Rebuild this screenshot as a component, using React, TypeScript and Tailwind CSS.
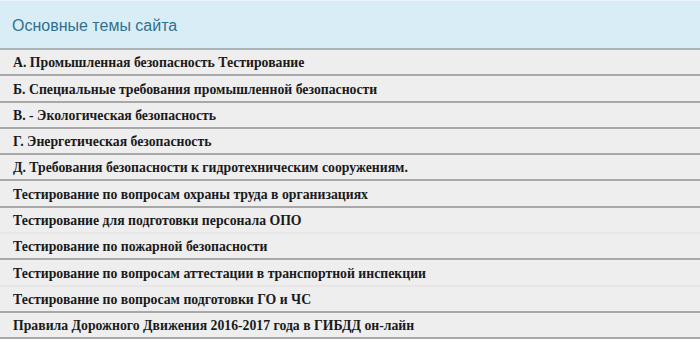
const topics = [
  { title: "А. Промышленная безопасность Тестирование" },
  { title: "Б. Специальные требования промышленной безопасности" },
  { title: "В. - Экологическая безопасность" },
  { title: "Г. Энергетическая безопасность" },
  { title: "Д. Требования безопасности к гидротехническим сооружениям." },
  { title: "Тестирование по вопросам охраны труда в организациях" },
  { title: "Тестирование для подготовки персонала ОПО", faint: true },
  { title: "Тестирование по пожарной безопасности" },
  { title: "Тестирование по вопросам аттестации в транспортной инспекции", faint: true },
  { title: "Тестирование по вопросам подготовки ГО и ЧС" },
  { title: "Правила Дорожного Движения 2016-2017 года в ГИБДД он-лайн" },
];

export default function App() {
  return (
    <div className="w-[700px] h-[341px] overflow-hidden bg-white">
      <div className="h-[50px] bg-[#d9edf7] border-t border-[#e8f4fa] border-b-2 border-b-[#a9b4b8] flex items-center px-3 pt-[2px]">
        <h2 className="text-[16px] text-[#31708f] font-['Liberation_Sans',Arial,sans-serif] leading-none">
          Основные темы сайта
        </h2>
      </div>

      <ul>
        {topics.map((t) => (
          <li
            key={t.title}
            className={
              t.faint
                ? "h-[26.3px] bg-[#eeeeee] border-b-2 border-[#e6e6e6] flex items-center pl-[13px] pt-[2px]"
                : "h-[26.3px] bg-[#eeeeee] border-b-2 border-[#a8a8a8] flex items-center pl-[13px] pt-[2px]"
            }
          >
            <a className="text-[13.75px] font-bold text-[#1a1a1a] font-['Liberation_Serif',Georgia,serif] leading-none">
              {t.title}
            </a>
          </li>
        ))}
      </ul>
    </div>
  );
}
